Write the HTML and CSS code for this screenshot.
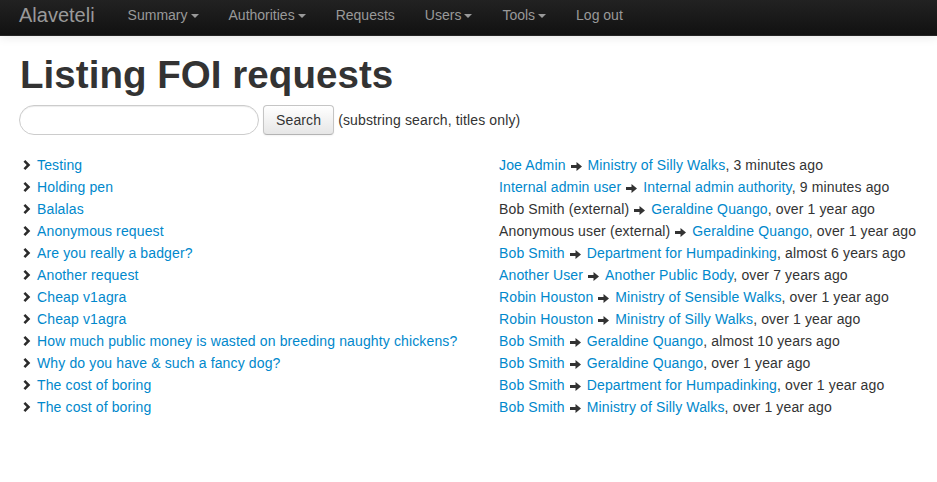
FILE: index.html
```html
<!DOCTYPE html>
<html lang="en">
<head>
<meta charset="utf-8">
<title>Listing FOI requests</title>
<link rel="stylesheet" href="styles.css">
</head>
<body>
<header class="navbar">
  <a class="brand" href="#">Alaveteli</a>
  <nav class="nav">
    <a href="#">Summary<span class="caret"></span></a>
    <a href="#">Authorities<span class="caret"></span></a>
    <a href="#">Requests</a>
    <a href="#">Users<span class="caret"></span></a>
    <a href="#">Tools<span class="caret"></span></a>
    <a href="#">Log out</a>
  </nav>
</header>
<main class="content">
  <h1>Listing FOI requests</h1>
  <form class="search">
    <input type="text" class="search-query">
    <button type="button" class="btn">Search</button>
    <span class="hint">(substring search, titles only)</span>
  </form>
  <div class="requests">
    <div class="title"><svg class="chev" viewBox="0 0 8 10"><path d="M0.5 1.8 L2.3 0 L7.3 5 L2.3 10 L0.5 8.2 L3.7 5 Z"/></svg><a href="#">Testing</a></div>
    <div class="meta"><a href="#">Joe Admin</a><svg class="arrow" viewBox="0 0 11 9"><path d="M0 3 H5.5 V0 L11 4.5 L5.5 9 V6 H0 Z"/></svg><a href="#">Ministry of Silly Walks</a>, 3 minutes ago</div>

    <div class="title"><svg class="chev" viewBox="0 0 8 10"><path d="M0.5 1.8 L2.3 0 L7.3 5 L2.3 10 L0.5 8.2 L3.7 5 Z"/></svg><a href="#">Holding pen</a></div>
    <div class="meta"><a href="#">Internal admin user</a><svg class="arrow" viewBox="0 0 11 9"><path d="M0 3 H5.5 V0 L11 4.5 L5.5 9 V6 H0 Z"/></svg><a href="#">Internal admin authority</a>, 9 minutes ago</div>

    <div class="title"><svg class="chev" viewBox="0 0 8 10"><path d="M0.5 1.8 L2.3 0 L7.3 5 L2.3 10 L0.5 8.2 L3.7 5 Z"/></svg><a href="#">Balalas</a></div>
    <div class="meta">Bob Smith (external)<svg class="arrow" viewBox="0 0 11 9"><path d="M0 3 H5.5 V0 L11 4.5 L5.5 9 V6 H0 Z"/></svg><a href="#">Geraldine Quango</a>, over 1 year ago</div>

    <div class="title"><svg class="chev" viewBox="0 0 8 10"><path d="M0.5 1.8 L2.3 0 L7.3 5 L2.3 10 L0.5 8.2 L3.7 5 Z"/></svg><a href="#">Anonymous request</a></div>
    <div class="meta">Anonymous user (external)<svg class="arrow" viewBox="0 0 11 9"><path d="M0 3 H5.5 V0 L11 4.5 L5.5 9 V6 H0 Z"/></svg><a href="#">Geraldine Quango</a>, over 1 year ago</div>

    <div class="title"><svg class="chev" viewBox="0 0 8 10"><path d="M0.5 1.8 L2.3 0 L7.3 5 L2.3 10 L0.5 8.2 L3.7 5 Z"/></svg><a href="#">Are you really a badger?</a></div>
    <div class="meta"><a href="#">Bob Smith</a><svg class="arrow" viewBox="0 0 11 9"><path d="M0 3 H5.5 V0 L11 4.5 L5.5 9 V6 H0 Z"/></svg><a href="#">Department for Humpadinking</a>, almost 6 years ago</div>

    <div class="title"><svg class="chev" viewBox="0 0 8 10"><path d="M0.5 1.8 L2.3 0 L7.3 5 L2.3 10 L0.5 8.2 L3.7 5 Z"/></svg><a href="#">Another request</a></div>
    <div class="meta"><a href="#">Another User</a><svg class="arrow" viewBox="0 0 11 9"><path d="M0 3 H5.5 V0 L11 4.5 L5.5 9 V6 H0 Z"/></svg><a href="#">Another Public Body</a>, over 7 years ago</div>

    <div class="title"><svg class="chev" viewBox="0 0 8 10"><path d="M0.5 1.8 L2.3 0 L7.3 5 L2.3 10 L0.5 8.2 L3.7 5 Z"/></svg><a href="#">Cheap v1agra</a></div>
    <div class="meta"><a href="#">Robin Houston</a><svg class="arrow" viewBox="0 0 11 9"><path d="M0 3 H5.5 V0 L11 4.5 L5.5 9 V6 H0 Z"/></svg><a href="#">Ministry of Sensible Walks</a>, over 1 year ago</div>

    <div class="title"><svg class="chev" viewBox="0 0 8 10"><path d="M0.5 1.8 L2.3 0 L7.3 5 L2.3 10 L0.5 8.2 L3.7 5 Z"/></svg><a href="#">Cheap v1agra</a></div>
    <div class="meta"><a href="#">Robin Houston</a><svg class="arrow" viewBox="0 0 11 9"><path d="M0 3 H5.5 V0 L11 4.5 L5.5 9 V6 H0 Z"/></svg><a href="#">Ministry of Silly Walks</a>, over 1 year ago</div>

    <div class="title"><svg class="chev" viewBox="0 0 8 10"><path d="M0.5 1.8 L2.3 0 L7.3 5 L2.3 10 L0.5 8.2 L3.7 5 Z"/></svg><a href="#">How much public money is wasted on breeding naughty chickens?</a></div>
    <div class="meta"><a href="#">Bob Smith</a><svg class="arrow" viewBox="0 0 11 9"><path d="M0 3 H5.5 V0 L11 4.5 L5.5 9 V6 H0 Z"/></svg><a href="#">Geraldine Quango</a>, almost 10 years ago</div>

    <div class="title"><svg class="chev" viewBox="0 0 8 10"><path d="M0.5 1.8 L2.3 0 L7.3 5 L2.3 10 L0.5 8.2 L3.7 5 Z"/></svg><a href="#">Why do you have &amp; such a fancy dog?</a></div>
    <div class="meta"><a href="#">Bob Smith</a><svg class="arrow" viewBox="0 0 11 9"><path d="M0 3 H5.5 V0 L11 4.5 L5.5 9 V6 H0 Z"/></svg><a href="#">Geraldine Quango</a>, over 1 year ago</div>

    <div class="title"><svg class="chev" viewBox="0 0 8 10"><path d="M0.5 1.8 L2.3 0 L7.3 5 L2.3 10 L0.5 8.2 L3.7 5 Z"/></svg><a href="#">The cost of boring</a></div>
    <div class="meta"><a href="#">Bob Smith</a><svg class="arrow" viewBox="0 0 11 9"><path d="M0 3 H5.5 V0 L11 4.5 L5.5 9 V6 H0 Z"/></svg><a href="#">Department for Humpadinking</a>, over 1 year ago</div>

    <div class="title"><svg class="chev" viewBox="0 0 8 10"><path d="M0.5 1.8 L2.3 0 L7.3 5 L2.3 10 L0.5 8.2 L3.7 5 Z"/></svg><a href="#">The cost of boring</a></div>
    <div class="meta"><a href="#">Bob Smith</a><svg class="arrow" viewBox="0 0 11 9"><path d="M0 3 H5.5 V0 L11 4.5 L5.5 9 V6 H0 Z"/></svg><a href="#">Ministry of Silly Walks</a>, over 1 year ago</div>
  </div>
</main>
</body>
</html>
```

FILE: styles.css
```css
* { box-sizing: border-box; }

body {
  margin: 0;
  font-family: "Liberation Sans", Arial, sans-serif;
  font-size: 14px;
  line-height: 20px;
  color: #333;
  background: #fff;
}

a { color: #0088cc; text-decoration: none; }

.navbar {
  height: 36px;
  display: flex;
  align-items: flex-start;
  padding: 5px 20px 0 19px;
  background: linear-gradient(to bottom, #222 0%, #111 100%);
  border-bottom: 1px solid #252525;
  box-shadow: 0 1px 10px rgba(0, 0, 0, 0.1);
}

.brand {
  font-size: 20px;
  line-height: 20px;
  color: #999;
  padding-right: 18px;
}

.nav {
  display: flex;
}

.nav a {
  color: #999;
  padding: 0 15px;
  line-height: 20px;
  font-size: 14px;
  display: inline-flex;
  align-items: center;
}

.caret {
  display: inline-block;
  width: 0;
  height: 0;
  margin-left: 3px;
  margin-top: 1px;
  border-top: 4px solid #999;
  border-left: 4px solid transparent;
  border-right: 4px solid transparent;
}

.content {
  padding: 0 20px;
  letter-spacing: 0.13px;
}

h1 {
  margin: 19px 0 10px;
  font-size: 38.5px;
  line-height: 40px;
  font-weight: bold;
  color: #333;
  letter-spacing: 0.05px;
}

.search {
  display: flex;
  align-items: center;
  gap: 4px;
  margin: 0 0 19px -1px;
}

.search-query {
  width: 240px;
  height: 30px;
  padding: 4px 14px;
  border: 1px solid #ccc;
  border-radius: 15px;
  box-shadow: inset 0 1px 1px rgba(0, 0, 0, 0.075);
  font-family: inherit;
  font-size: 14px;
}

.btn {
  height: 30px;
  padding: 4px 12px;
  font-family: inherit;
  font-size: 14px;
  line-height: 20px;
  letter-spacing: 0.13px;
  color: #333;
  background: linear-gradient(to bottom, #fff 0%, #e6e6e6 100%);
  border: 1px solid #c5c5c5;
  border-bottom-color: #b3b3b3;
  border-radius: 4px;
  box-shadow: inset 0 1px 0 rgba(255, 255, 255, 0.2), 0 1px 2px rgba(0, 0, 0, 0.05);
}

.hint {
  margin-left: 0;
}

.requests {
  display: grid;
  grid-template-columns: 479px 1fr;
  line-height: 22px;
}

.title {
  display: flex;
  align-items: center;
  white-space: nowrap;
}

.chev {
  width: 8px;
  height: 10px;
  fill: #2b2b2b;
  margin: 0 6px 0 3px;
  flex: none;
}

.meta {
  white-space: nowrap;
}

.arrow {
  width: 11px;
  height: 9px;
  fill: #333;
  margin: 0 6px 0 5px;
  vertical-align: -1px;
}
```
